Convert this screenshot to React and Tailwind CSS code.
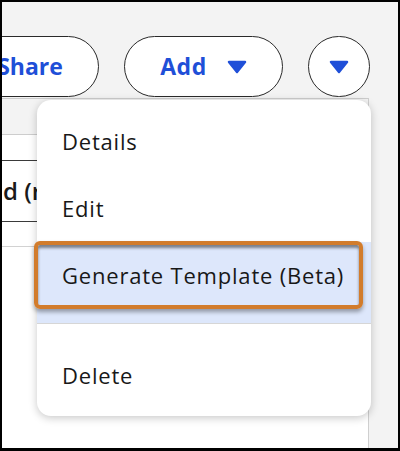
import React from 'react';

// Small down-pointing caret used in the toolbar buttons
const Caret = ({ className = '' }) => (
  <svg width="20" height="14" viewBox="0 0 20 14" className={className}>
    <polygon points="2,2 18,2 10,12" fill="#1f4fd8" stroke="#1f4fd8" strokeWidth="2.5" strokeLinejoin="round" />
  </svg>
);

const ToolbarButton = ({ children, className = '' }) => (
  <button
    className={`h-[61px] shrink-0 rounded-full border-[1.5px] border-[#2a2a2a] bg-white flex items-center justify-center text-[23px] font-bold text-[#1f4fd8] ${className}`}
  >
    {children}
  </button>
);

const MenuItem = ({ label, className = '' }) => (
  <div className={`h-[67px] flex items-center pl-[25px] text-[22px] tracking-[0.8px] text-[#181818] ${className}`}>
    {label}
  </div>
);

export default function App() {
  return (
    <div className="relative w-[400px] h-[451px] border-2 border-b-[3px] border-black bg-[#f3f3f3] overflow-hidden flex flex-col font-['Open_Sans',sans-serif]">
      {/* Toolbar */}
      <div className="flex gap-[25px] pt-[34px] ml-[-36px]">
        <ToolbarButton className="w-[133px] pr-[5px]">Share</ToolbarButton>
        <ToolbarButton className="w-[159px] gap-[20px]">
          <span className="tracking-[0.5px]">Add</span>
          <Caret />
        </ToolbarButton>
        <ToolbarButton className="w-[62px]">
          <Caret />
        </ToolbarButton>
      </div>

      {/* Table behind the menu */}
      <div className="mt-px w-[367px] flex-1 flex flex-col bg-white border-r border-[#cfcfcf]">
        <div className="h-[37px] bg-[#f3f3f3] border-t border-b border-[#cdcdcd]" />
        <div className="h-[26px] border-b border-[#3a3a3a]" />
        <div className="h-[61px] flex items-center border-b border-[#3a3a3a]">
          <div className="w-[35px] overflow-hidden whitespace-nowrap pl-px text-[24px] font-semibold text-[#1a1a1a]">
            d (r
          </div>
        </div>
        <div className="h-[25px] border-b border-[#d2d2d2]" />
        <div className="flex-1" />
      </div>

      {/* Dropdown menu */}
      <div className="absolute left-[35px] top-[98px] w-[334px] rounded-[14px] bg-white shadow-[0_2px_8px_rgba(0,0,0,0.22)] pt-[8px] pb-[7px]">
        <MenuItem label="Details" />
        <MenuItem label="Edit" />
        <div className="h-[81px] bg-[#dde7fb]">
          <MenuItem label="Generate Template (Beta)" />
        </div>
        <div className="h-px bg-[#d6d6d6]" />
        <div className="pt-[18px]">
          <MenuItem label="Delete" />
        </div>

        {/* Highlight annotation */}
        <div className="absolute left-[-3px] top-[141px] w-[329px] h-[68px] rounded-[6px] border-4 border-[#d27c2c] shadow-[0_3px_4px_rgba(0,0,0,0.35),inset_0_3px_3px_rgba(0,0,0,0.45)]" />
      </div>
    </div>
  );
}
